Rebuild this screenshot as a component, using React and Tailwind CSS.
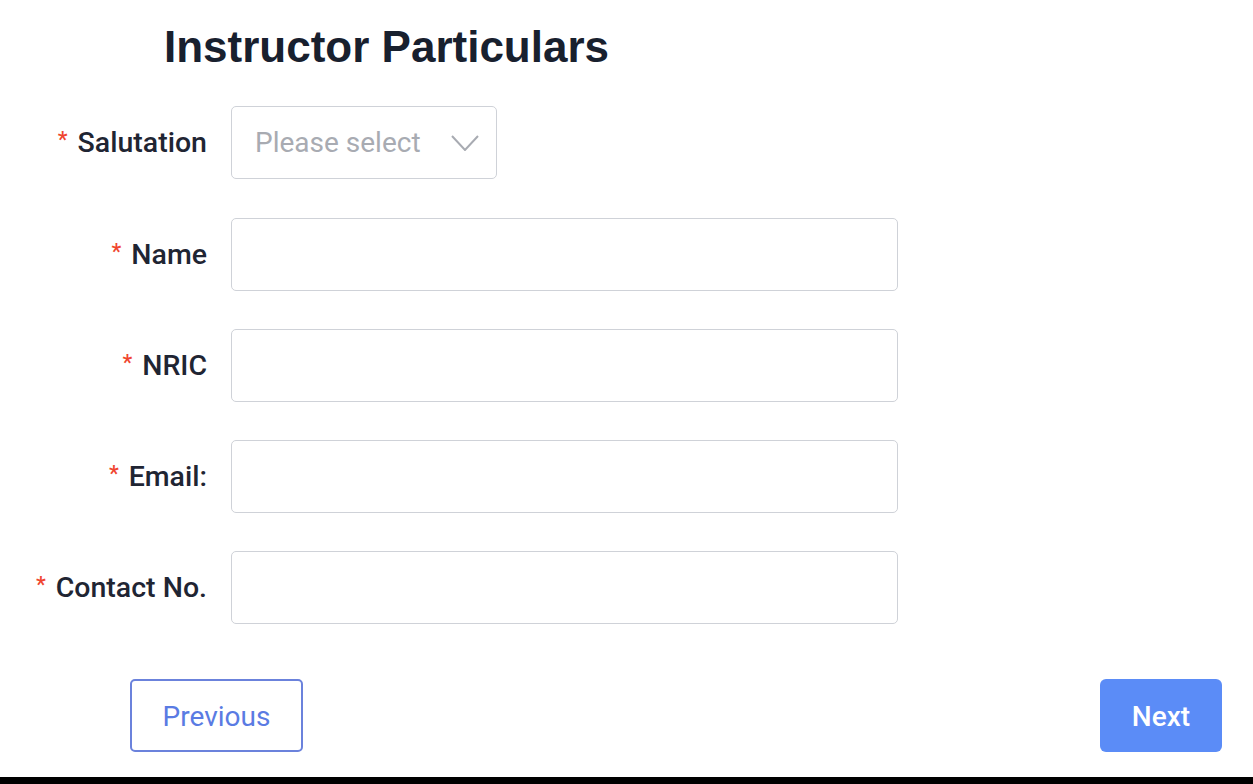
export default function App() {
  const fields = [
    { label: 'Name' },
    { label: 'NRIC' },
    { label: 'Email:' },
    { label: 'Contact No.' },
  ];

  const Label = ({ text }) => (
    <div className="w-[231px] pr-[24px] pt-[2px] flex items-center justify-end text-[28.5px] font-medium text-[#1f2533] whitespace-nowrap">
      <span className="text-[22px] text-[#f0452f] mr-[10px] relative top-[-4px]">*</span>
      {text}
    </div>
  );

  return (
    <div className="w-[1253px] h-[784px] bg-white flex flex-col overflow-hidden" style={{ fontFamily: 'Roboto, "Liberation Sans", sans-serif' }}>
      <h1 className="pl-[164px] mt-[20px] h-[53px] leading-[53px] text-[44px] font-bold text-[#18202e]" style={{ fontFamily: '"Liberation Sans", Arial, sans-serif' }}>
        Instructor Particulars
      </h1>

      <div className="mt-[33px] flex flex-col gap-[38px]">
        <div className="flex mb-[1px]">
          <Label text="Salutation" />
          <div className="w-[266px] h-[73px] border border-[#cfd2d8] rounded-[5px] flex items-center justify-between pl-[23px] pr-[17px]">
            <span className="text-[28px] text-[#a8abb2]">Please select</span>
            <svg width="28" height="16" viewBox="0 0 28 16" fill="none" stroke="#a8abb2" strokeWidth="2">
              <polyline points="1,1 14,15 27,1" />
            </svg>
          </div>
        </div>
        {fields.map((f) => (
          <div key={f.label} className="flex">
            <Label text={f.label} />
            <div className="w-[667px] h-[73px] border border-[#cfd2d8] rounded-[5px]" />
          </div>
        ))}
      </div>

      <div className="mt-[55px] flex justify-between pl-[130px] pr-[31px]">
        <button className="w-[173px] h-[73px] pt-[3px] border-2 border-[#6b82dc] rounded-[5px] text-[28px] text-[#5a7be3] bg-white">
          Previous
        </button>
        <button className="w-[122px] h-[73px] pt-[3px] rounded-[6px] bg-[#5b8cf7] text-[28px] font-medium text-white">
          Next
        </button>
      </div>

      <div className="flex-1" />
      <div className="h-[7px] bg-black" />
    </div>
  );
}
